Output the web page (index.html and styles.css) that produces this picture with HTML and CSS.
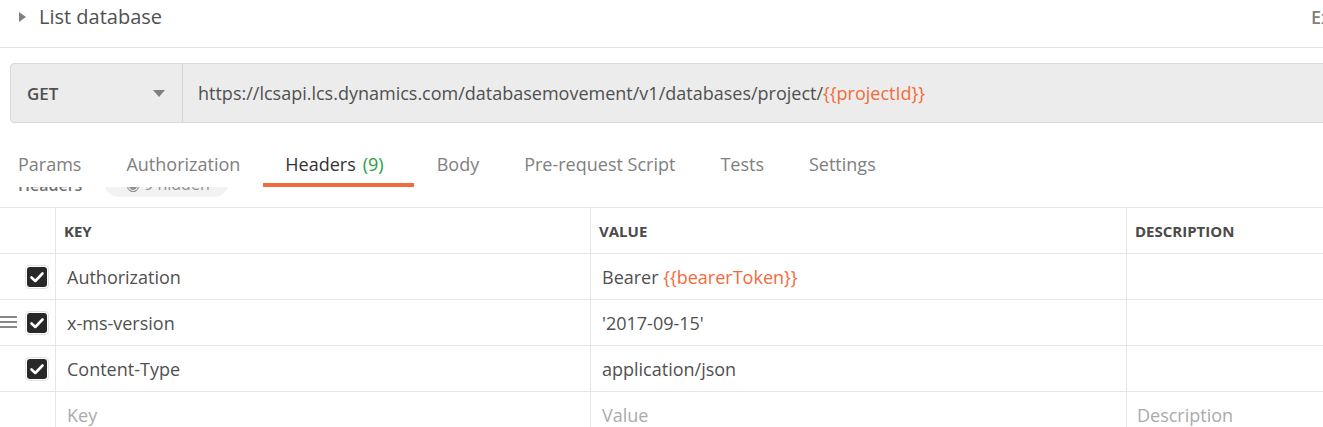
FILE: index.html
```html
<!DOCTYPE html>
<html>
<head>
<meta charset="utf-8">
<link rel="stylesheet" href="styles.css">
</head>
<body>
<div class="page">
  <div class="title-row">
    <span class="caret-right"></span>
    <span class="title">List database</span>
    <span class="spacer"></span>
    <span class="examples">Examples</span>
  </div>

  <div class="url-bar">
    <div class="method">
      <span class="method-name">GET</span>
      <span class="caret-down"></span>
    </div>
    <div class="url"><span>https://lcsapi.lcs.dynamics.com/databasemovement/v1/databases/project/<span class="var">{{projectId}}</span></span></div>
  </div>

  <div class="tabs">
    <div class="tab first">Params</div>
    <div class="tab">Authorization</div>
    <div class="tab active">Headers<span class="count">(9)</span></div>
    <div class="tab">Body</div>
    <div class="tab">Pre-request Script</div>
    <div class="tab">Tests</div>
    <div class="tab">Settings</div>
  </div>

  <div class="peek">
    <div class="peek-inner">
      <span class="peek-label">Headers</span>
      <span class="pill">&#9673; 9 hidden</span>
    </div>
  </div>

  <div class="table">
    <div class="row head">
      <div class="cell check"></div>
      <div class="cell key">KEY</div>
      <div class="cell value">VALUE</div>
      <div class="cell desc">DESCRIPTION</div>
    </div>
    <div class="row">
      <div class="cell check"><span class="cb"><svg viewBox="0 0 20 20" width="20" height="20"><path d="M4.5 10.5 L8.3 14 L15.5 6.5" fill="none" stroke="#fff" stroke-width="2.6" stroke-linecap="round" stroke-linejoin="round"/></svg></span></div>
      <div class="cell key">Authorization</div>
      <div class="cell value"><span>Bearer <span class="var">{{bearerToken}}</span></span></div>
      <div class="cell desc"></div>
    </div>
    <div class="row">
      <div class="cell check"><span class="handle"><i></i><i></i><i></i></span><span class="cb"><svg viewBox="0 0 20 20" width="20" height="20"><path d="M4.5 10.5 L8.3 14 L15.5 6.5" fill="none" stroke="#fff" stroke-width="2.6" stroke-linecap="round" stroke-linejoin="round"/></svg></span></div>
      <div class="cell key">x-ms-version</div>
      <div class="cell value">'2017-09-15'</div>
      <div class="cell desc"></div>
    </div>
    <div class="row">
      <div class="cell check"><span class="cb"><svg viewBox="0 0 20 20" width="20" height="20"><path d="M4.5 10.5 L8.3 14 L15.5 6.5" fill="none" stroke="#fff" stroke-width="2.6" stroke-linecap="round" stroke-linejoin="round"/></svg></span></div>
      <div class="cell key">Content-Type</div>
      <div class="cell value">application/json</div>
      <div class="cell desc"></div>
    </div>
    <div class="row">
      <div class="cell check"></div>
      <div class="cell key ph">Key</div>
      <div class="cell value ph">Value</div>
      <div class="cell desc ph">Description</div>
    </div>
  </div>
</div>
</body>
</html>
```

FILE: styles.css
```css
html, body {
  margin: 0;
  padding: 0;
  background: #fff;
  overflow: hidden;
}
body {
  font-family: "Open Sans", "Noto Sans", sans-serif;
  color: #505050;
}
.page {
  width: 1400px;
}

/* title */
.title-row {
  display: flex;
  align-items: center;
  height: 48px;
  box-sizing: border-box;
  padding: 0 0 13px 19px;
  border-bottom: 1px solid #e2e2e2;
}
.caret-right {
  width: 0;
  height: 0;
  border-top: 5px solid transparent;
  border-bottom: 5px solid transparent;
  border-left: 7px solid #808080;
  margin-right: 13px;
}
.title {
  font-size: 20px;
  line-height: 26px;
  color: #505050;
}
.spacer { flex: 1; }
.examples {
  width: 89px;
  flex-shrink: 0;
  font-size: 18px;
  line-height: 26px;
  color: #808080;
  font-weight: 600;
  white-space: nowrap;
}

/* url bar */
.url-bar {
  display: flex;
  margin: 15px 0 0 10px;
  height: 60px;
  box-sizing: border-box;
  background: #ececec;
  border: 1px solid #d9d9d9;
  border-radius: 4px 0 0 4px;
}
.method {
  width: 172px;
  box-sizing: border-box;
  display: flex;
  align-items: center;
  padding: 0 17px 0 16px;
  border-right: 1px solid #d4d4d4;
}
.method-name {
  flex: 1;
  font-size: 17px;
  font-weight: 600;
  color: #505050;
}
.caret-down {
  width: 0;
  height: 0;
  border-left: 6px solid transparent;
  border-right: 6px solid transparent;
  border-top: 7px solid #808080;
}
.url {
  display: flex;
  align-items: center;
  padding-left: 15px;
  font-size: 18px;
  color: #505050;
  white-space: nowrap;
}
.var { color: #f26b3a; }

/* tabs */
.tabs {
  display: flex;
}
.tab {
  padding: 29px 22.5px 7px;
  line-height: 24px;
  font-size: 18px;
  color: #808080;
  border-bottom: 4px solid transparent;
  white-space: nowrap;
}
.tab.first { padding-left: 18px; }
.tab.active {
  color: #333;
  border-bottom-color: #f26b3a;
}
.count {
  color: #26a043;
  margin-left: 7px;
  padding-right: 8px;
}

/* clipped content under the sticky tabs */
.peek {
  height: 20px;
  overflow: hidden;
}
.peek-inner {
  display: flex;
  align-items: center;
  margin-top: -20px;
  height: 30px;
  padding-left: 18px;
}
.peek-label {
  font-size: 16px;
  font-weight: 600;
  color: #707070;
  width: 86px;
  position: relative;
  top: 3px;
}
.pill {
  display: inline-flex;
  align-items: center;
  height: 30px;
  width: 125px;
  box-sizing: border-box;
  padding: 3px 0 0 22px;
  border-radius: 15px;
  background: #f2f2f2;
  font-size: 16px;
  color: #909090;
}

/* table */
.table {
  border-top: 1px solid #e6e6e6;
}
.row {
  display: grid;
  grid-template-columns: 55px 535px 536px 1fr;
  height: 46px;
  box-sizing: border-box;
  border-bottom: 1px solid #e6e6e6;
}
.cell {
  display: flex;
  align-items: center;
  font-size: 18px;
  color: #505050;
  white-space: nowrap;
  box-sizing: border-box;
}
.cell.key, .cell.value, .cell.desc {
  border-left: 1px solid #e6e6e6;
}
.cell.key { padding-left: 11px; }
.cell.value { padding-left: 11px; }
.cell.desc { padding-left: 10px; }
.row.head .cell {
  font-size: 15px;
  font-weight: 700;
  color: #4a4a4a;
}
.row.head .cell.key,
.row.head .cell.value,
.row.head .cell.desc { padding-left: 8px; }
.cell.ph { color: #ababab; }

.cell.check {
  position: relative;
  justify-content: flex-end;
  padding-right: 6px;
}
.cb {
  width: 24px;
  height: 24px;
  box-sizing: border-box;
  border: 1px solid #e2e2e2;
  border-radius: 4px;
  padding: 1px;
  display: flex;
}
.cb svg {
  display: block;
  width: 20px;
  height: 20px;
  background: #282828;
  border-radius: 3px;
}
.handle {
  position: absolute;
  left: 0;
  top: 16px;
  width: 17px;
  display: flex;
  flex-direction: column;
  gap: 3px;
}
.handle i {
  display: block;
  height: 2px;
  background: #888;
}
```
